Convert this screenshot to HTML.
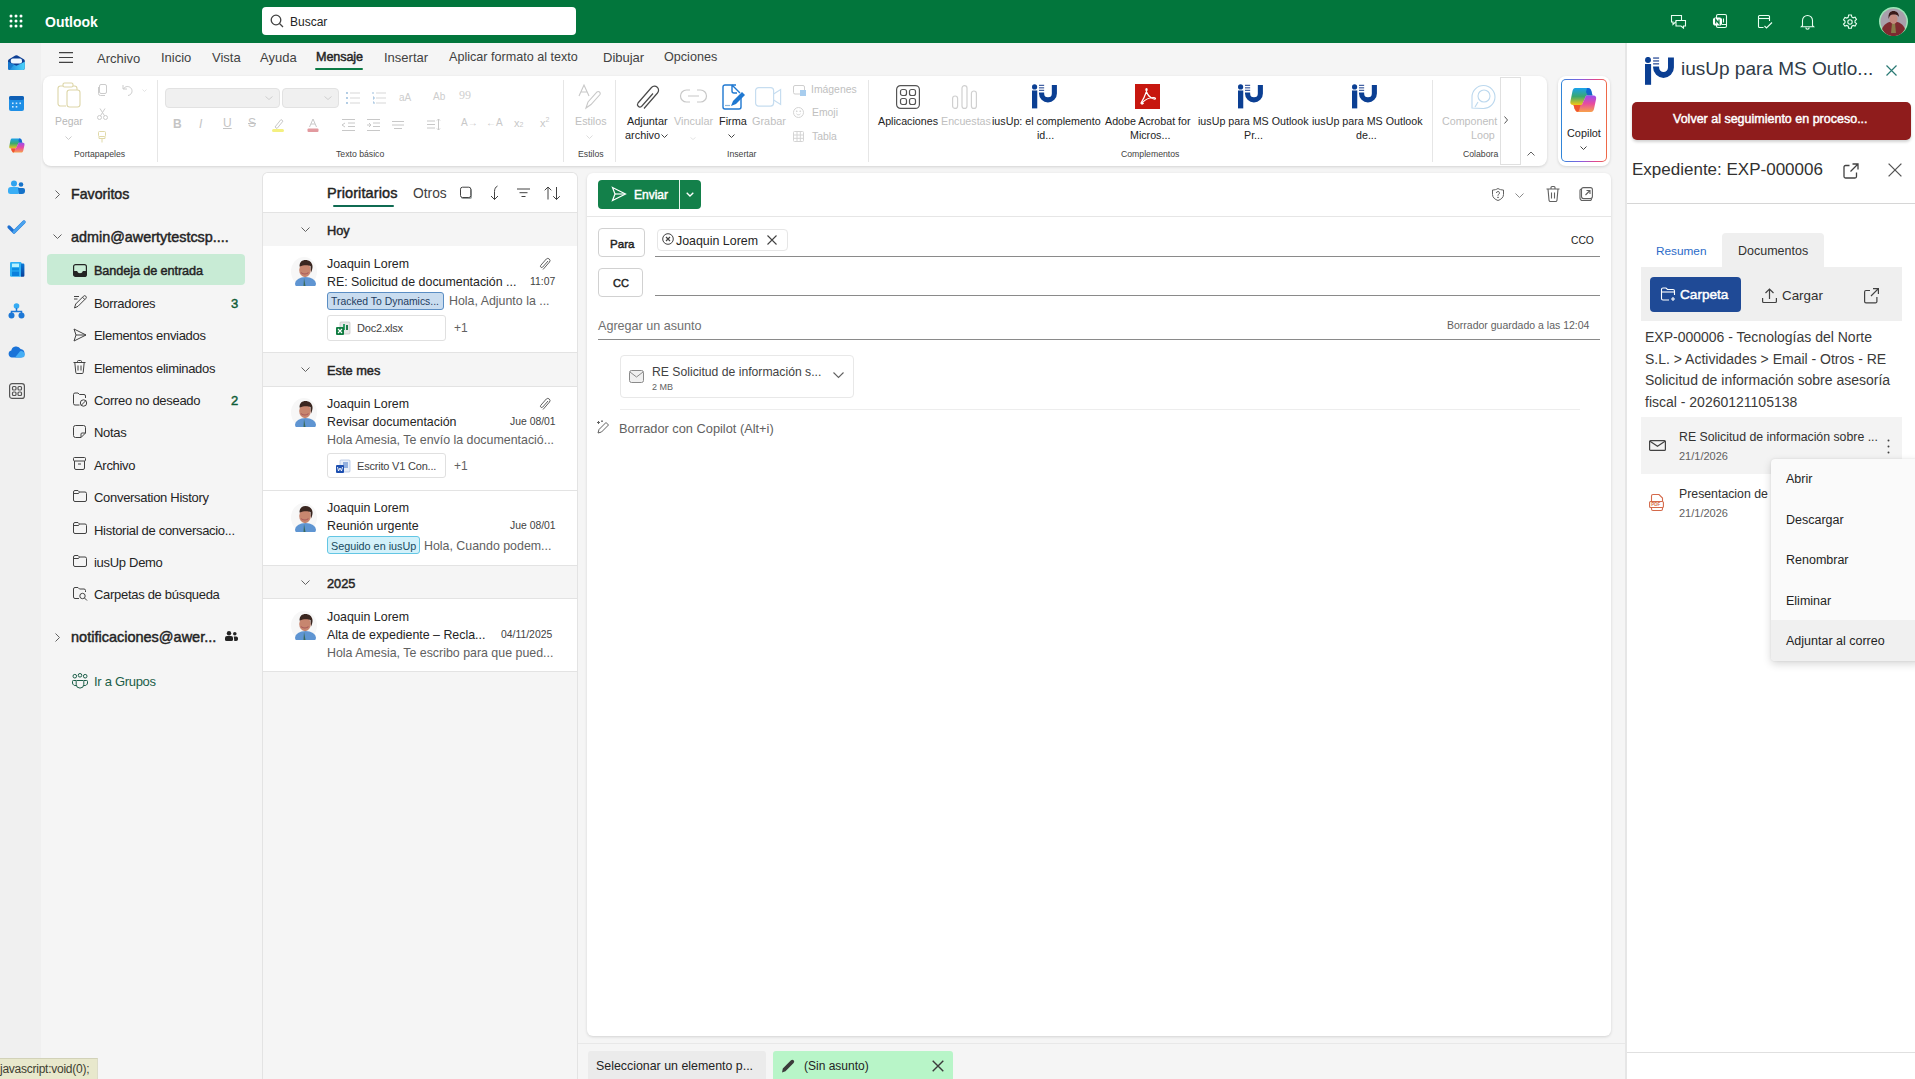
<!DOCTYPE html>
<html><head><meta charset="utf-8">
<style>
*{box-sizing:border-box;margin:0;padding:0}
html,body{width:1915px;height:1079px;overflow:hidden}
body{font-family:"Liberation Sans",sans-serif;background:#f5f5f5;position:relative;color:#242424;font-size:13px}
.a{position:absolute}
.t{position:absolute;white-space:nowrap}
svg{position:absolute;overflow:visible}
#top{left:0;top:0;width:1915px;height:43px;background:#02763c}
#rail{left:0;top:43px;width:41px;height:1036px;background:#f0f0f0}
#ribbon{left:43px;top:76px;width:1504px;height:90px;background:#fff;border-radius:8px;box-shadow:0 1px 3px rgba(0,0,0,.14)}
#copcard{left:1558px;top:76px;width:52px;height:90px;background:#fff;border-radius:8px;box-shadow:0 1px 3px rgba(0,0,0,.14)}
#list{left:262px;top:173px;width:315px;height:906px;background:#fff;border-radius:6px 6px 0 0;box-shadow:0 0 2px rgba(0,0,0,.12)}
#compose{left:587px;top:173px;width:1024px;height:863px;background:#fff;border-radius:6px;box-shadow:0 1px 3px rgba(0,0,0,.14)}
#rpane{left:1625px;top:43px;width:290px;height:1036px;background:#fff;border-left:2px solid #e6e6e6}
#folders .t{font-size:13px;color:#242424;letter-spacing:-.3px}
#folders .cnt{color:#0e5c36;letter-spacing:0;-webkit-text-stroke:.45px #0e5c36}
.grp{left:263px;width:314px;background:#f5f5f5}
.gt{font-size:12.8px;color:#242424;-webkit-text-stroke:.45px #242424}
.ln{font-size:12.4px}
.dt{font-size:10.4px;color:#424242}
.av{width:26px;height:29px;border-radius:50%;overflow:hidden;background:radial-gradient(ellipse 45% 30% at 50% 95%,#6d9ed6 0 99%,transparent 100%),radial-gradient(ellipse 28% 34% at 50% 42%,#b9765a 0 99%,transparent 100%),radial-gradient(ellipse 30% 22% at 50% 24%,#3a2a22 0 99%,transparent 100%),#f3f3f3}
.mi{font-size:12.5px;color:#242424}
</style></head><body>
<!-- TOP BAR -->
<div id="top" class="a">
  <svg style="left:9px;top:14px" width="14" height="14" viewBox="0 0 14 14" fill="#fff"><circle cx="2" cy="2" r="1.5"/><circle cx="7" cy="2" r="1.5"/><circle cx="12" cy="2" r="1.5"/><circle cx="2" cy="7" r="1.5"/><circle cx="7" cy="7" r="1.5"/><circle cx="12" cy="7" r="1.5"/><circle cx="2" cy="12" r="1.5"/><circle cx="7" cy="12" r="1.5"/><circle cx="12" cy="12" r="1.5"/></svg>
  <div class="t" style="left:45px;top:14px;font-size:14px;font-weight:700;color:#fff">Outlook</div>
  <div class="a" style="left:262px;top:7px;width:314px;height:28px;background:#fff;border-radius:4px"></div>
  <svg style="left:270px;top:14px" width="14" height="14" viewBox="0 0 14 14" fill="none" stroke="#424242" stroke-width="1.3"><circle cx="6" cy="6" r="4.8"/><path d="M9.5 9.5L13 13"/></svg>
  <div class="t" style="left:290px;top:15px;font-size:12px;color:#242424">Buscar</div>
  <!-- right icons -->
  <svg style="left:1670px;top:14px" width="16" height="15" viewBox="0 0 16 15" fill="none" stroke="#eafff2" stroke-width="1.1"><path d="M1.5 1.5h10v6.5H5.5L3 10.5V8H1.5z"/><path d="M6 6.5h9.5V12H13.5v2l-2.5-2H6z" fill="#02763c"/></svg>
  <svg style="left:1713px;top:13px" width="15" height="16" viewBox="0 0 15 16" fill="none" stroke="#eafff2" stroke-width="1.1"><rect x="3.5" y="1.5" width="10" height="13" rx="1.5"/><path d="M10.5 5.5v4M9 11.5h4.5"/><rect x="0.5" y="5" width="8" height="7" rx="2" fill="#fff" stroke="#fff"/><path d="M2.7 10.5V6.5l3.3 4v-4" stroke="#02763c" stroke-width="1.2"/></svg>
  <svg style="left:1757px;top:14px" width="16" height="16" viewBox="0 0 16 16" fill="none" stroke="#eafff2" stroke-width="1.1"><path d="M6.5 13.5H2.5a1 1 0 0 1-1-1v-10a1 1 0 0 1 1-1h9a1 1 0 0 1 1 1V7"/><path d="M1.5 4.5h11"/><path d="M7.5 12l2 2 5.5-5.5"/></svg>
  <svg style="left:1800px;top:14px" width="15" height="16" viewBox="0 0 15 16" fill="none" stroke="#eafff2" stroke-width="1.1"><path d="M2.5 11.5V6.5a5 5 0 0 1 10 0v5l1.2 1.3H1.3z"/><path d="M5.8 13.5a1.7 1.7 0 0 0 3.4 0"/></svg>
  <svg style="left:1842px;top:14px" width="16" height="16" viewBox="0 0 16 16" fill="none" stroke="#eafff2" stroke-width="1.1"><path d="M6.6 1h2.8l.4 2 1.4.8 1.9-.7 1.4 2.4-1.5 1.3v1.6l1.5 1.3-1.4 2.4-1.9-.7-1.4.8-.4 2H6.6l-.4-2-1.4-.8-1.9.7L1.5 10l1.5-1.3V7.1L1.5 5.8l1.4-2.4 1.9.7 1.4-.8z"/><circle cx="8" cy="8" r="2.2"/></svg>
  <svg style="left:1879px;top:7px" width="29" height="29"><use href="#avatar"/></svg>
</div>
<!-- LEFT RAIL -->
<div id="rail" class="a">
  <svg style="left:8px;top:12px" width="17" height="15" viewBox="0 0 17 15"><defs><linearGradient id="mg" x1="0" y1="0" x2="1" y2="0"><stop offset="0" stop-color="#1a86d8"/><stop offset="1" stop-color="#4cd4fc"/></linearGradient></defs><path d="M0 6Q0 5 1 4.3L7.3.6Q8.4 0 9.5.6L15.8 4.3Q16.8 5 16.8 6V13Q16.8 15 14.8 15H2Q0 15 0 13Z" fill="#0d3f94"/><rect x="2.8" y="3.6" width="11.2" height="5" rx="2" fill="#eef8ff"/><path d="M0 6.8L8.4 10.8 16.8 6.8V13Q16.8 15 14.8 15H2Q0 15 0 13Z" fill="url(#mg)"/><path d="M0 6.8L6 9.7 1.5 15H2Q0 15 0 13Z" fill="#1470c8" opacity=".7"/></svg>
  <svg style="left:9px;top:53px" width="15" height="15" viewBox="0 0 15 15"><rect x="0" y="0" width="15" height="15" rx="2" fill="#1e8fe6"/><rect x="0" y="0" width="15" height="4" rx="2" fill="#0f5fb5"/><g fill="#cfeaff"><rect x="3" y="6.5" width="1.6" height="1.6"/><rect x="6.7" y="6.5" width="1.6" height="1.6"/><rect x="10.4" y="6.5" width="1.6" height="1.6"/><rect x="3" y="10" width="1.6" height="1.6"/><rect x="6.7" y="10" width="1.6" height="1.6"/></g></svg>
  <svg style="left:9px;top:95px" width="16" height="15"><use href="#cop"/></svg>
  <svg style="left:8px;top:137px" width="17" height="14" viewBox="0 0 17 14"><circle cx="6" cy="3.5" r="3" fill="#2ea3ef"/><circle cx="13" cy="4.5" r="2.3" fill="#1572c9"/><path d="M0 10a3 3 0 0 1 3-3h6a3 3 0 0 1 3 3v1.5A2.5 2.5 0 0 1 9.5 14h-7A2.5 2.5 0 0 1 0 11.5z" fill="#3aaef5"/><path d="M10 8h5a2 2 0 0 1 2 2v1a3 3 0 0 1-3 3h-3" fill="#1572c9"/></svg>
  <svg style="left:8px;top:177px" width="17" height="14" viewBox="0 0 17 14"><path d="M1 7l5 5L16 2" fill="none" stroke="#1d6fd1" stroke-width="3.2" stroke-linecap="round" stroke-linejoin="round"/><path d="M6 12L16 2" stroke="#4aa3ee" stroke-width="3" stroke-linecap="round"/></svg>
  <svg style="left:10px;top:219px" width="15" height="15" viewBox="0 0 15 15"><defs><linearGradient id="bg2" x1="0" y1="0" x2="0" y2="1"><stop offset="0" stop-color="#0a7ad8"/><stop offset="1" stop-color="#0a3f98"/></linearGradient></defs><rect x="0" y="0" width="11.5" height="14.7" rx="1.3" fill="#2db0f4"/><rect x="2" y="1.6" width="7" height="3.6" fill="#b6f2ff"/><rect x="2" y="5.7" width="7" height="2.8" fill="#0b8ce2"/><rect x="2" y="9.5" width="7" height="4.5" fill="#0a80dc"/><path d="M11 1.5h2.2a1.2 1.2 0 0 1 1.2 1.2v10.8a1.2 1.2 0 0 1-1.2 1.2H11z" fill="url(#bg2)"/></svg>
  <svg style="left:8px;top:260px" width="17" height="16" viewBox="0 0 17 16" fill="#1d78d6"><circle cx="8.5" cy="3" r="2.8" fill="#34aaf2"/><path d="M8.5 5v3.5M3.5 11V8.5h10V11" fill="none" stroke="#1d78d6" stroke-width="1.5"/><circle cx="3.5" cy="12.5" r="3"/><circle cx="13.5" cy="12.5" r="3"/></svg>
  <svg style="left:8px;top:302px" width="17" height="13" viewBox="0 0 17 13"><path d="M4 12.5A3.5 3.5 0 0 1 3.3 5.6 5 5 0 0 1 12.6 4 4.3 4.3 0 0 1 13 12.5z" fill="#1a73d8"/><path d="M7 12.5L12 6.2A3.6 3.6 0 0 1 16.8 9.5 3 3 0 0 1 14 12.5z" fill="#45aef5"/></svg>
  <svg style="left:9px;top:340px" width="16" height="16" viewBox="0 0 16 16" fill="none" stroke="#555" stroke-width="1.2"><rect x=".6" y=".6" width="14.8" height="14.8" rx="2.5"/><rect x="3.5" y="3.5" width="3.5" height="3.5" rx="1"/><rect x="9" y="3.5" width="3.5" height="3.5" rx="1"/><rect x="3.5" y="9" width="3.5" height="3.5" rx="1"/><rect x="9" y="9" width="3.5" height="3.5" rx="1"/></svg>
</div>
<!-- TABS -->
<svg style="left:59px;top:52px" width="14" height="11" viewBox="0 0 16 11" preserveAspectRatio="none" stroke="#424242" stroke-width="1.2"><path d="M0 .6h16M0 5.5h16M0 10.4h16"/></svg>
<div class="t" style="left:97px;top:51px;font-size:13px;color:#424242">Archivo</div>
<div class="t" style="left:161px;top:50px;font-size:13px;color:#424242">Inicio</div>
<div class="t" style="left:212px;top:50px;font-size:13px;color:#424242">Vista</div>
<div class="t" style="left:260px;top:50px;font-size:13px;color:#424242">Ayuda</div>
<div class="t" style="left:316px;top:50px;font-size:12.6px;color:#242424;letter-spacing:-.1px;-webkit-text-stroke:.45px #242424">Mensaje</div>
<div class="a" style="left:315px;top:68px;width:48px;height:2px;background:#0b7a44;border-radius:1px"></div>
<div class="t" style="left:384px;top:50px;font-size:13px;color:#424242">Insertar</div>
<div class="t" style="left:449px;top:50px;font-size:12.6px;color:#424242">Aplicar formato al texto</div>
<div class="t" style="left:603px;top:50px;font-size:13px;color:#424242">Dibujar</div>
<div class="t" style="left:664px;top:50px;font-size:12.6px;color:#424242">Opciones</div>
<div id="ribbon" class="a"></div>
<div id="copcard" class="a"></div>
<!-- RIBBON CONTENT -->
<svg width="0" height="0" style="position:absolute"><defs>
<symbol id="man" viewBox="0 0 26 29"><ellipse cx="13" cy="14.5" rx="13" ry="14.5" fill="#f7f7f7"/><ellipse cx="14.5" cy="26.5" rx="10.5" ry="6.5" fill="#5f95d2"/><path d="M13 21l1.5 8h-2z" fill="#3a6a5a"/><ellipse cx="14" cy="13" rx="5.8" ry="7.2" fill="#c7866f"/><path d="M8.5 9.5C8.5 5 11 3 14.5 3S21 5 21.5 9c.2 2-.5 4.5-1.5 6.5L19.5 9C17 8 12 8 9 9.5z" fill="#3a2620"/><path d="M10 15.5c1.5 2 6 2 7.5 0" stroke="#a85a5a" stroke-width="1.2" fill="none"/></symbol>
<symbol id="avatar" viewBox="0 0 29 29"><circle cx="14.5" cy="14.5" r="14.5" fill="#9ee6b8"/><circle cx="14.5" cy="14.5" r="13" fill="#a8a0ac"/><path d="M3 22c2-5 6-7.5 11.5-7.5S24 17 26 22c-2.5 4.5-6.5 7-11.5 7S5.5 26.5 3 22z" fill="#7e2a30"/><path d="M13 16h3l1 10h-5z" fill="#8a7a4a"/><ellipse cx="14.5" cy="12" rx="4" ry="5" fill="#c48a80"/><path d="M9.5 10c0-4 2-6 5-6s5.5 2 5.5 6c-1-2-3-2.5-5.5-2.5S11 8 9.5 12z" fill="#3a1a1a"/></symbol>
<symbol id="cop" viewBox="0 0 27 24"><defs><linearGradient id="cg1" x1="0" y1="0" x2="0" y2="1"><stop offset="0" stop-color="#1aa2ee"/><stop offset=".5" stop-color="#3aa870"/><stop offset="1" stop-color="#f4c614"/></linearGradient><linearGradient id="cg2" x1="0" y1="0" x2="0" y2="1"><stop offset="0" stop-color="#9b4cf0"/><stop offset=".5" stop-color="#e84c9e"/><stop offset="1" stop-color="#f8a24a"/></linearGradient></defs><path d="M5 0H18C20 0 21 1.5 21.5 3.5L22.5 7.5H17.5C16.5 7.5 15.8 8 15.5 9L12 17H3C1 17 0 15.5 .4 13.5L2.5 3C3 1 4 0 5 0Z" fill="url(#cg1)"/><path d="M17 0H18C20 0 21 1.5 21.5 3.5L22.5 7.5H17.5L16 4Z" fill="#0f56d6" opacity=".8"/><path d="M21 24H8C6 24 5 22.5 4.5 20.5L3.5 17H10.5C11.5 17 12.2 16.5 12.5 15.5L16 7.5H23.5C25.5 7.5 26.5 9 26.1 11L24 21C23.5 23 22.5 24 21 24Z" fill="url(#cg2)"/><path d="M4.5 20.5L3.5 17H10.5L9 22.5C8.5 24 7 24 6.5 23.5Z" fill="#f0542e"/></symbol>
<symbol id="iu" viewBox="0 0 29 28"><circle cx="3" cy="2.9" r="3" fill="#0b3f93"/><rect x="0" y="7" width="6.1" height="20.8" fill="#0b3f93"/><g fill="#30519a"><rect x="8.1" y="0.4" width="6" height="1.3"/><rect x="8.1" y="3.3" width="6" height="1.3"/><rect x="8.1" y="6.2" width="6" height="1.3"/></g><path d="M8.1 9.4H14.1V10.5A4.45 4.45 0 0 0 23 10.5V0.6H28.9V10.5A10.4 10.4 0 0 1 8.1 10.5Z" fill="#0b3f93"/></symbol>
</defs></svg>
<div class="t" style="left:0;top:0"></div>
<!-- Portapapeles -->
<svg style="left:57px;top:82px" width="24" height="26" viewBox="0 0 24 26" fill="none" stroke="#ddd6a8" stroke-width="1.1"><path d="M6 4H3.5A2.5 2.5 0 0 0 1 6.5v15A2.5 2.5 0 0 0 3.5 24H9"/><rect x="6" y="1" width="10" height="4" rx="1.5"/><rect x="10" y="8" width="13" height="17" rx="2.5"/><path d="M16 4h1.5A2.5 2.5 0 0 1 20 6.5V8"/></svg>
<div class="t" style="left:55px;top:116px;font-size:10.4px;color:#b8b8b8">Pegar</div>
<svg style="left:65px;top:136px" width="7" height="4" viewBox="0 0 7 4" fill="none" stroke="#ccc" stroke-width="1"><path d="M.5.5l3 3 3-3"/></svg>
<svg style="left:98px;top:84px" width="9" height="12" viewBox="0 0 9 12" fill="none" stroke="#ccc" stroke-width="1"><rect x="1.5" y=".5" width="7" height="9" rx="1.5"/><path d="M.5 3v6.5A2 2 0 0 0 2.5 11.5H7"/></svg>
<svg style="left:122px;top:84px" width="11" height="12" viewBox="0 0 11 12" fill="none" stroke="#ccc" stroke-width="1"><path d="M1 1v4h4"/><path d="M1.5 5A4.5 4.5 0 1 1 6 11.5"/></svg>
<svg style="left:142px;top:89px" width="5" height="3" viewBox="0 0 5 3" fill="none" stroke="#ddd" stroke-width=".8"><path d="M.5.5l2 2 2-2"/></svg>
<svg style="left:97px;top:108px" width="11" height="12" viewBox="0 0 11 12" fill="none" stroke="#ccc" stroke-width="1"><circle cx="2.5" cy="9.5" r="2"/><circle cx="8.5" cy="9.5" r="2"/><path d="M3.5 7.8L8 .5M7.5 7.8L3 .5"/></svg>
<svg style="left:98px;top:131px" width="8" height="12" viewBox="0 0 8 12" fill="none" stroke="#e0d9a8" stroke-width="1"><rect x=".5" y=".5" width="7" height="5" rx="1"/><path d="M1 5.5v2h6v-2M4 7.5v4"/></svg>
<div class="t" style="left:74px;top:149px;font-size:8.7px;color:#424242">Portapapeles</div>
<div class="a" style="left:157px;top:80px;width:1px;height:82px;background:#e6e6e6"></div>
<!-- Texto basico -->
<div class="a" style="left:165px;top:88px;width:115px;height:20px;background:#f0f0f0;border:1px solid #e2e2e2;border-radius:4px"></div>
<svg style="left:265px;top:96px" width="8" height="4" viewBox="0 0 8 4" fill="none" stroke="#d0d0d0" stroke-width="1"><path d="M.5.5l3.5 3 3.5-3"/></svg>
<div class="a" style="left:282px;top:88px;width:57px;height:20px;background:#f0f0f0;border:1px solid #e2e2e2;border-radius:4px"></div>
<svg style="left:324px;top:96px" width="8" height="4" viewBox="0 0 8 4" fill="none" stroke="#d0d0d0" stroke-width="1"><path d="M.5.5l3.5 3 3.5-3"/></svg>
<g></g>
<svg style="left:346px;top:92px" width="14" height="12" viewBox="0 0 14 12" fill="none" stroke="#d2d2d2" stroke-width=".9"><circle cx="1" cy="1" r=".9" fill="#8fb6d8" stroke="none"/><circle cx="1" cy="6" r=".9" fill="#8fb6d8" stroke="none"/><circle cx="1" cy="11" r=".9" fill="#8fb6d8" stroke="none"/><path d="M4 1h10M4 6h10M4 11h10"/></svg>
<svg style="left:372px;top:92px" width="14" height="12" viewBox="0 0 14 12" fill="none" stroke="#d2d2d2" stroke-width=".9"><path d="M1 0v2M1 5h1v2H1M1 10h1v2" stroke="#8fb6d8"/><path d="M4 1h10M4 6h10M4 11h10"/></svg>
<div class="t" style="left:399px;top:92px;font-size:10px;color:#cdcdcd">aA</div>
<div class="t" style="left:433px;top:91px;font-size:10px;color:#cdcdcd">Ab</div>
<div class="t" style="left:459px;top:88px;font-size:12px;color:#cfcfcf;font-family:'Liberation Serif'">99</div>
<div class="t" style="left:173px;top:117px;font-size:12px;color:#c4c4c4;font-weight:700">B</div>
<div class="t" style="left:199px;top:117px;font-size:12px;color:#c4c4c4;font-style:italic">I</div>
<div class="t" style="left:223px;top:116px;font-size:12px;color:#c4c4c4;text-decoration:underline">U</div>
<div class="t" style="left:248px;top:116px;font-size:12px;color:#c4c4c4;text-decoration:line-through">S</div>
<svg style="left:272px;top:118px" width="13" height="14" viewBox="0 0 13 14" fill="none" stroke="#c8c8c8" stroke-width="1"><path d="M3 9L9 1.5l2 1.6L5 10.5z"/><rect x="0" y="11" width="12" height="3" rx="1.5" fill="#f4f080" stroke="none"/></svg>
<svg style="left:307px;top:118px" width="12" height="14" viewBox="0 0 12 14" fill="none" stroke="#c8c8c8" stroke-width="1"><path d="M2.5 9L6 1l3.5 8M4 6h4"/><rect x=".5" y="10.5" width="11" height="3.5" rx="1" fill="#e29a9f" stroke="none"/></svg>
<svg style="left:341px;top:119px" width="14" height="12" viewBox="0 0 14 12" fill="none" stroke="#c8c8c8" stroke-width="1"><path d="M1 .5h13M7 4h7M7 7.5h7M1 11.5h13M4 4L1 6l3 2"/></svg>
<svg style="left:366px;top:119px" width="14" height="12" viewBox="0 0 14 12" fill="none" stroke="#c8c8c8" stroke-width="1"><path d="M1 .5h13M7 4h7M7 7.5h7M1 11.5h13M1 6h4M3 4l2 2-2 2"/></svg>
<svg style="left:392px;top:121px" width="12" height="8" viewBox="0 0 12 8" fill="none" stroke="#c8c8c8" stroke-width="1"><path d="M0 .5h12M0 4h12M2 7.5h8"/></svg>
<svg style="left:427px;top:118px" width="14" height="13" viewBox="0 0 14 13" fill="none" stroke="#c8c8c8" stroke-width="1"><path d="M0 3h8M0 6.5h8M0 10h8M11.5 1v11M10 2.5l1.5-1.5 1.5 1.5M10 10.5l1.5 1.5 1.5-1.5"/></svg>
<div class="t" style="left:461px;top:117px;font-size:10px;color:#c8c8c8">A→</div>
<div class="t" style="left:486px;top:117px;font-size:10px;color:#c8c8c8">←A</div>
<div class="t" style="left:514px;top:117px;font-size:11px;color:#c8c8c8">x<span style="font-size:7px">2</span></div>
<div class="t" style="left:540px;top:116px;font-size:11px;color:#c8c8c8">x<sup style="font-size:7px">2</sup></div>
<div class="t" style="left:336px;top:149px;font-size:8.7px;color:#424242">Texto básico</div>
<div class="a" style="left:563px;top:80px;width:1px;height:82px;background:#e6e6e6"></div>
<!-- Estilos -->
<svg style="left:578px;top:84px" width="24" height="26" viewBox="0 0 24 26" fill="none" stroke="#c8c8c8" stroke-width="1.1"><path d="M1 12L6 1l5 11M3 8h6"/><path d="M8 24l2-6 9-10a2 2 0 0 1 3 2.5l-9 10z"/></svg>
<div class="t" style="left:575px;top:115px;font-size:10.7px;color:#c0c0c0">Estilos</div>
<svg style="left:586px;top:135px" width="7" height="4" viewBox="0 0 7 4" fill="none" stroke="#ddd" stroke-width="1"><path d="M.5.5l3 3 3-3"/></svg>
<div class="t" style="left:578px;top:149px;font-size:8.7px;color:#424242">Estilos</div>
<div class="a" style="left:615px;top:80px;width:1px;height:82px;background:#e6e6e6"></div>
<!-- Insertar -->
<svg style="left:634px;top:84px" width="27" height="26" viewBox="0 0 27 26" fill="none" stroke="#4a4a4a" stroke-width="1.2"><path d="M10 24.5L23.5 9a4 4 0 0 0-6-5.5L4 19a2.5 2.5 0 0 0 3.5 3.5L19 9.5"/></svg>
<div class="t" style="left:627px;top:115px;font-size:10.9px;color:#242424">Adjuntar</div>
<div class="t" style="left:625px;top:129px;font-size:10.9px;color:#242424">archivo</div>
<svg style="left:661px;top:134px" width="7" height="4" viewBox="0 0 7 4" fill="none" stroke="#424242" stroke-width="1"><path d="M.5.5l3 3 3-3"/></svg>
<svg style="left:680px;top:89px" width="27" height="14" viewBox="0 0 27 14" fill="none" stroke="#c8c8c8" stroke-width="1.2"><path d="M10 13H6.5a6 6 0 0 1 0-12H10M17 13h3.5a6 6 0 0 0 0-12H17M8 7h11"/></svg>
<div class="t" style="left:674px;top:115px;font-size:10.9px;color:#c0c0c0">Vincular</div>
<svg style="left:690px;top:137px" width="6" height="3" viewBox="0 0 6 3" fill="none" stroke="#ddd" stroke-width=".8"><path d="M.5.5l2.5 2 2.5-2"/></svg>
<svg style="left:722px;top:84px" width="23" height="26" viewBox="0 0 23 26" fill="none"><path d="M14 1H3A2 2 0 0 0 1 3v20a2 2 0 0 0 2 2h14a2 2 0 0 0 2-2V14" stroke="#1f78d1" stroke-width="1.4"/><path d="M10 1v6a2 2 0 0 0 2 2h3M10 1l8 8" stroke="#1f78d1" stroke-width="1.4"/><path d="M9 22l2-5 9-9 3 3-9 9z" fill="#1f78d1"/><path d="M3 21.5h5" stroke="#8fb6d8" stroke-width="1.2"/></svg>
<div class="t" style="left:719px;top:115px;font-size:10.9px;color:#242424">Firma</div>
<svg style="left:728px;top:134px" width="7" height="4" viewBox="0 0 7 4" fill="none" stroke="#424242" stroke-width="1"><path d="M.5.5l3 3 3-3"/></svg>
<svg style="left:755px;top:87px" width="27" height="20" viewBox="0 0 27 20" fill="none" stroke="#c6ddf0" stroke-width="1.2"><rect x=".6" y=".6" width="18" height="18.5" rx="3"/><path d="M18.6 7l7-4.5v15l-7-4.5"/></svg>
<div class="t" style="left:752px;top:115px;font-size:10.9px;color:#c0c0c0">Grabar</div>
<svg style="left:793px;top:85px" width="13" height="11" viewBox="0 0 13 11" fill="none" stroke="#cfcfcf" stroke-width="1"><rect x=".5" y=".5" width="11" height="8.5" rx="1.5"/><rect x="7" y="5" width="6" height="6" fill="#a8cdee" stroke="none"/></svg>
<div class="t" style="left:811px;top:84px;font-size:10.4px;color:#c0c0c0">Imágenes</div>
<svg style="left:793px;top:107px" width="11" height="11" viewBox="0 0 11 11" fill="none" stroke="#d4d4d4" stroke-width="1"><circle cx="5.5" cy="5.5" r="5"/><path d="M3.5 6.8a2.5 2.5 0 0 0 4 0"/><circle cx="3.8" cy="4.2" r=".4" fill="#ccc"/><circle cx="7.2" cy="4.2" r=".4" fill="#ccc"/></svg>
<div class="t" style="left:812px;top:107px;font-size:10.4px;color:#c0c0c0">Emoji</div>
<svg style="left:793px;top:131px" width="11" height="11" viewBox="0 0 11 11" fill="none" stroke="#d4d4d4" stroke-width="1"><rect x=".5" y=".5" width="10" height="10" rx="1"/><path d="M.5 4h10M.5 7.3h10M4 .5v10M7.3 .5v10"/></svg>
<div class="t" style="left:812px;top:131px;font-size:10.4px;color:#c0c0c0">Tabla</div>
<div class="t" style="left:727px;top:149px;font-size:8.7px;color:#424242">Insertar</div>
<div class="a" style="left:868px;top:80px;width:1px;height:82px;background:#e6e6e6"></div>
<!-- Complementos -->
<svg style="left:896px;top:85px" width="24" height="24" viewBox="0 0 24 24" fill="none" stroke="#555" stroke-width="1.2"><rect x=".6" y=".6" width="22.8" height="22.8" rx="4"/><rect x="4.5" y="4.5" width="6" height="6" rx="2"/><rect x="13.5" y="4.5" width="6" height="6" rx="2"/><rect x="4.5" y="13.5" width="6" height="6" rx="2"/><rect x="13.5" y="13.5" width="6" height="6" rx="2"/></svg>
<div class="t" style="left:878px;top:115px;font-size:10.7px;color:#242424">Aplicaciones</div>
<svg style="left:952px;top:85px" width="25" height="24" viewBox="0 0 25 24" fill="none" stroke="#d0d0d0" stroke-width="1.2"><rect x=".6" y="11" width="5" height="12.4" rx="2.5"/><rect x="10" y=".6" width="5" height="22.8" rx="2.5"/><rect x="19.4" y="6" width="5" height="17.4" rx="2.5"/></svg>
<div class="t" style="left:941px;top:115px;font-size:10.7px;color:#c0c0c0">Encuestas</div>
<svg style="left:1032px;top:84px" width="25" height="25"><use href="#iu"/></svg>
<div class="t" style="left:992px;top:115px;font-size:10.7px;color:#242424">iusUp: el complemento</div>
<div class="t" style="left:1037px;top:129px;font-size:10.7px;color:#242424">id...</div>
<svg style="left:1135px;top:84px" width="25" height="25" viewBox="0 0 25 25"><rect width="25" height="25" fill="#c7170f"/><path d="M6 19c2-3 4-7 6-13 .5-2-1.5-2-1 0 1 4 4 8 8 9 2 .5 2-1.5 0-1.5-4 0-9 2-12 5.5-1 1 0 1.5 1 .5z" fill="none" stroke="#fff" stroke-width="1.2"/></svg>
<div class="t" style="left:1105px;top:115px;font-size:10.7px;color:#242424">Adobe Acrobat for</div>
<div class="t" style="left:1130px;top:129px;font-size:10.7px;color:#242424">Micros...</div>
<svg style="left:1238px;top:84px" width="25" height="25"><use href="#iu"/></svg>
<div class="t" style="left:1198px;top:115px;font-size:10.7px;color:#242424">iusUp para MS Outlook</div>
<div class="t" style="left:1244px;top:129px;font-size:10.7px;color:#242424">Pr...</div>
<svg style="left:1352px;top:84px" width="25" height="25"><use href="#iu"/></svg>
<div class="t" style="left:1312px;top:115px;font-size:10.7px;color:#242424">iusUp para MS Outlook</div>
<div class="t" style="left:1356px;top:129px;font-size:10.7px;color:#242424">de...</div>
<div class="t" style="left:1121px;top:149px;font-size:8.7px;color:#424242">Complementos</div>
<div class="a" style="left:1432px;top:80px;width:1px;height:82px;background:#e6e6e6"></div>
<!-- Colabora -->
<svg style="left:1470px;top:84px" width="26" height="26" viewBox="0 0 26 26" fill="none" stroke="#bcd8ee" stroke-width="1.1"><path d="M2 24V13A11.5 11.5 0 1 1 13 24.5z"/><circle cx="14" cy="12" r="6"/><path d="M8 18l-3 5"/></svg>
<div class="t" style="left:1442px;top:115px;width:58px;overflow:hidden;font-size:10.7px;color:#c0c0c0">Component</div>
<div class="t" style="left:1471px;top:129px;font-size:10.7px;color:#c0c0c0">Loop</div>
<div class="t" style="left:1463px;top:149px;width:37px;overflow:hidden;font-size:8.7px;color:#424242">Colabora</div>
<div class="a" style="left:1500px;top:77px;width:21px;height:88px;border:1px solid #e0e0e0;background:#fff"></div>
<svg style="left:1504px;top:116px" width="4" height="8" viewBox="0 0 4 8" fill="none" stroke="#555" stroke-width="1"><path d="M.5.5l3 3.5-3 3.5"/></svg>
<svg style="left:1527px;top:151px" width="8" height="5" viewBox="0 0 8 5" fill="none" stroke="#616161" stroke-width="1"><path d="M.5 4.5l3.5-3.5 3.5 3.5"/></svg>
<!-- Copilot card -->
<div class="a" style="left:1561px;top:79px;width:46px;height:83px;border-radius:5px;padding:1.2px;background:linear-gradient(90deg,#2f86d8 0%,#8a5ce0 45%,#e0468f 75%,#ef6a45 100%)"><div style="width:100%;height:100%;background:#fff;border-radius:4px"></div></div>
<svg style="left:1570px;top:88px" width="27" height="24"><use href="#cop"/></svg>
<div class="t" style="left:1567px;top:127px;font-size:10.9px;color:#242424">Copilot</div>
<svg style="left:1580px;top:146px" width="7" height="4" viewBox="0 0 7 4" fill="none" stroke="#424242" stroke-width="1"><path d="M.5.5l3 3 3-3"/></svg>
<!-- FOLDER PANE -->
<svg style="left:55px;top:190px" width="5" height="9" viewBox="0 0 5 9" fill="none" stroke="#616161" stroke-width="1"><path d="M.5.5l4 4-4 4"/></svg>
<div class="t" style="left:71px;top:186px;font-size:14.2px;color:#242424;letter-spacing:0;-webkit-text-stroke:.45px #242424">Favoritos</div>
<svg style="left:53px;top:234px" width="9" height="5" viewBox="0 0 9 5" fill="none" stroke="#616161" stroke-width="1"><path d="M.5.5l4 4 4-4"/></svg>
<div class="t" style="left:71px;top:229px;font-size:14.4px;color:#242424;letter-spacing:0;-webkit-text-stroke:.45px #242424">admin@awertytestcsp....</div>
<div class="a" style="left:47px;top:254px;width:198px;height:31px;background:#c8ebd5;border-radius:4px"></div>
<svg style="left:73px;top:264px" width="14" height="13" viewBox="0 0 14 13"><rect x=".6" y=".6" width="12.8" height="11.8" rx="2" fill="none" stroke="#242424" stroke-width="1.2"/><path d="M.6 7h3.5a3 3 0 0 0 5.8 0h3.5v3.4a2 2 0 0 1-2 2H2.6a2 2 0 0 1-2-2z" fill="#242424"/></svg>
<div class="t" style="left:94px;top:264px;font-size:12.7px;color:#242424;letter-spacing:-.1px;-webkit-text-stroke:.45px #242424">Bandeja de entrada</div>
<div id="folders">
<svg style="left:73px;top:295px" width="14" height="14" viewBox="0 0 14 14" fill="none" stroke="#424242" stroke-width="1"><path d="M1 1.5h5M1 4h3.5M1.5 13l1.2-4L10.5 1.2a1.6 1.6 0 0 1 2.3 2.3L5 11.3z"/><path d="M9.5 2.2l2.3 2.3"/></svg>
<div class="t" style="left:94px;top:296px">Borradores</div><div class="t cnt" style="left:231px;top:296px">3</div>
<svg style="left:73px;top:328px" width="14" height="14" viewBox="0 0 14 14" fill="none" stroke="#424242" stroke-width="1"><path d="M1 1l12 6-12 6 2-6z"/><path d="M3 7h10"/></svg>
<div class="t" style="left:94px;top:328px">Elementos enviados</div>
<svg style="left:73px;top:360px" width="13" height="14" viewBox="0 0 13 14" fill="none" stroke="#424242" stroke-width="1"><path d="M.5 2.5h12M4.5 2.5V1.5a1 1 0 0 1 1-1h2a1 1 0 0 1 1 1v1M1.8 2.5l1 10a1 1 0 0 0 1 1h5.4a1 1 0 0 0 1-1l1-10M5 5.5v5M8 5.5v5"/></svg>
<div class="t" style="left:94px;top:361px">Elementos eliminados</div>
<svg style="left:73px;top:392px" width="15" height="15" viewBox="0 0 15 15" fill="none" stroke="#424242" stroke-width="1"><path d="M6.5 13H2a1.5 1.5 0 0 1-1.5-1.5v-9A1.5 1.5 0 0 1 2 1h3l1.5 1.5H11A1.5 1.5 0 0 1 12.5 4v2"/><circle cx="10.5" cy="11" r="3.2"/><path d="M8.3 13.2l4.4-4.4"/></svg>
<div class="t" style="left:94px;top:393px">Correo no deseado</div><div class="t cnt" style="left:231px;top:393px">2</div>
<svg style="left:73px;top:425px" width="13" height="13" viewBox="0 0 13 13" fill="none" stroke="#424242" stroke-width="1"><path d="M8 12.5H2.5a2 2 0 0 1-2-2v-8a2 2 0 0 1 2-2h8a2 2 0 0 1 2 2V8z"/><path d="M8 12.5V9a1 1 0 0 1 1-1h3.5"/></svg>
<div class="t" style="left:94px;top:425px">Notas</div>
<svg style="left:73px;top:457px" width="13" height="13" viewBox="0 0 13 13" fill="none" stroke="#424242" stroke-width="1"><rect x=".5" y=".5" width="12" height="3.5" rx="1"/><path d="M1.5 4v7a1.5 1.5 0 0 0 1.5 1.5h7A1.5 1.5 0 0 0 11.5 11V4M5 7h3"/></svg>
<div class="t" style="left:94px;top:458px">Archivo</div>
<svg style="left:73px;top:490px" width="14" height="12" viewBox="0 0 14 12" fill="none" stroke="#424242" stroke-width="1"><path d="M.5 2A1.5 1.5 0 0 1 2 .5h3l1.5 1.5H12A1.5 1.5 0 0 1 13.5 3.5v6.5A1.5 1.5 0 0 1 12 11.5H2A1.5 1.5 0 0 1 .5 10z"/><path d="M.5 3.5h5l1-1.5"/></svg>
<div class="t" style="left:94px;top:490px">Conversation History</div>
<svg style="left:73px;top:522px" width="14" height="12" viewBox="0 0 14 12" fill="none" stroke="#424242" stroke-width="1"><path d="M.5 2A1.5 1.5 0 0 1 2 .5h3l1.5 1.5H12A1.5 1.5 0 0 1 13.5 3.5v6.5A1.5 1.5 0 0 1 12 11.5H2A1.5 1.5 0 0 1 .5 10z"/><path d="M.5 3.5h5l1-1.5"/></svg>
<div class="t" style="left:94px;top:523px">Historial de conversacio...</div>
<svg style="left:73px;top:555px" width="14" height="12" viewBox="0 0 14 12" fill="none" stroke="#424242" stroke-width="1"><path d="M.5 2A1.5 1.5 0 0 1 2 .5h3l1.5 1.5H12A1.5 1.5 0 0 1 13.5 3.5v6.5A1.5 1.5 0 0 1 12 11.5H2A1.5 1.5 0 0 1 .5 10z"/><path d="M.5 3.5h5l1-1.5"/></svg>
<div class="t" style="left:94px;top:555px">iusUp Demo</div>
<svg style="left:73px;top:587px" width="15" height="14" viewBox="0 0 15 14" fill="none" stroke="#424242" stroke-width="1"><path d="M6 11.5H2A1.5 1.5 0 0 1 .5 10V2A1.5 1.5 0 0 1 2 .5h3l1.5 1.5H11A1.5 1.5 0 0 1 12.5 3.5V5"/><circle cx="9.5" cy="9" r="2.7"/><path d="M11.5 11l2.5 2.5"/></svg>
<div class="t" style="left:94px;top:587px">Carpetas de búsqueda</div>
</div>
<svg style="left:55px;top:633px" width="5" height="9" viewBox="0 0 5 9" fill="none" stroke="#616161" stroke-width="1"><path d="M.5.5l4 4-4 4"/></svg>
<div class="t" style="left:71px;top:629px;font-size:14.5px;color:#242424;letter-spacing:0;-webkit-text-stroke:.45px #242424">notificaciones@awer...</div>
<svg style="left:225px;top:631px" width="13" height="10" viewBox="0 0 13 10" fill="#242424"><circle cx="4" cy="2.3" r="2.2"/><circle cx="9.8" cy="2.8" r="1.8"/><path d="M0 7a2 2 0 0 1 2-2h4a2 2 0 0 1 2 2v1.5A1.5 1.5 0 0 1 6.5 10h-5A1.5 1.5 0 0 1 0 8.5z"/><path d="M8.8 5.5h2.5a1.7 1.7 0 0 1 1.7 1.7v1A1.8 1.8 0 0 1 11.2 10H9.3z"/></svg>
<svg style="left:72px;top:673px" width="16" height="15" viewBox="0 0 16 15" fill="none" stroke="#1b5e48" stroke-width="1"><circle cx="2.8" cy="3.2" r="1.8"/><circle cx="8" cy="2.3" r="1.8"/><circle cx="13.2" cy="3.2" r="1.8"/><path d="M5 7.5h6a.8.8 0 0 1 .8.8v3a3.8 3.8 0 0 1-7.6 0v-3A.8.8 0 0 1 5 7.5z"/><path d="M4 12.5A2.8 2.8 0 0 1 .5 10V8.3a.8.8 0 0 1 .8-.8H4M12 12.5a2.8 2.8 0 0 0 3.5-2.5V8.3a.8.8 0 0 0-.8-.8H12"/></svg>
<div class="t" style="left:94px;top:674px;font-size:13px;color:#1b5e48;letter-spacing:-.3px">Ir a Grupos</div>
<!-- MESSAGE LIST -->
<div class="a" style="left:262px;top:172px;width:316px;height:907px;background:#f5f5f5;border:1px solid #e3e3e3;border-bottom:none;border-radius:6px 6px 0 0"></div>
<div class="a" style="left:263px;top:173px;width:314px;height:498px;background:#fff;border-radius:5px 5px 0 0"></div>
<div class="t" style="left:327px;top:185px;font-size:14.5px;color:#242424;letter-spacing:.1px;-webkit-text-stroke:.45px #242424">Prioritarios</div>
<div class="a" style="left:333px;top:205px;width:61px;height:2px;background:#0f6b52;border-radius:1px"></div>
<div class="t" style="left:413px;top:186px;font-size:13.8px;color:#424242">Otros</div>
<svg style="left:459px;top:186px" width="15" height="14" viewBox="0 0 15 14" fill="none"><rect x="2" y="2.5" width="11" height="10.5" rx="2" fill="#9aa0a0"/><rect x="1.5" y="1.2" width="10.3" height="10.3" rx="2" fill="#fff" stroke="#424242" stroke-width="1"/></svg>
<svg style="left:489px;top:185px" width="11" height="16" viewBox="0 0 11 16" fill="none" stroke="#424242" stroke-width="1"><path d="M8.5 1C6.5 2 5.5 4 5.5 6.5V14.5M2 11l3.5 3.5L9 11"/></svg>
<svg style="left:517px;top:188px" width="13" height="10" viewBox="0 0 13 10" fill="none" stroke="#424242" stroke-width="1"><path d="M0 1h13M2.5 4.7h8M4.5 8.5h4"/></svg>
<svg style="left:544px;top:186px" width="17" height="14" viewBox="0 0 17 14" fill="none" stroke="#424242" stroke-width="1"><path d="M4 13.5V1M.7 4.3L4 1l3.3 3.3M12.5 1v12.5M9.2 10.2l3.3 3.3 3.3-3.3"/></svg>
<div class="a" style="left:263px;top:212px;width:314px;height:1px;background:#e3e3e3"></div>
<!-- group Hoy -->
<div class="a grp" style="top:213px;height:33px"></div>
<svg style="left:301px;top:227px" width="9" height="5" viewBox="0 0 9 5" fill="none" stroke="#616161" stroke-width="1"><path d="M.5.5l4 4 4-4"/></svg>
<div class="t gt" style="left:327px;top:223px">Hoy</div>
<!-- email 1 -->
<svg style="left:291px;top:257px" width="26" height="29"><use href="#man"/></svg>
<div class="t ln" style="left:327px;top:257px;color:#242424">Joaquin Lorem</div>
<svg style="left:539px;top:256px" width="12" height="14" viewBox="0 0 12 14" fill="none" stroke="#616161" stroke-width="1"><path d="M4 13.5L10.5 6a2.2 2.2 0 0 0-3.2-3L1.8 9.3a1.3 1.3 0 0 0 1.9 1.8L9 5"/></svg>
<div class="t ln" style="left:327px;top:275px;color:#242424">RE: Solicitud de documentación ...</div>
<div class="t dt" style="left:530px;top:276px">11:07</div>
<div class="a" style="left:327px;top:292px;width:117px;height:18px;background:#c9dcef;border:1px solid #5b8ec4;border-radius:3px"></div>
<div class="t" style="left:331px;top:296px;font-size:10.4px;color:#1f3c5f">Tracked To Dynamics...</div>
<div class="t ln" style="left:449px;top:294px;color:#616161">Hola, Adjunto la ...</div>
<div class="a" style="left:327px;top:315px;width:119px;height:26px;border:1px solid #e0e0e0;border-radius:3px"></div>
<svg style="left:336px;top:321px" width="15" height="15" viewBox="0 0 15 15"><rect x="4" y="1" width="10" height="12" rx="1" fill="#e8e8e8" stroke="#bbb" stroke-width=".6"/><rect x="7" y="3" width="2" height="6" fill="#33a06a"/><rect x="10" y="4" width="2" height="5" fill="#1e7a4a"/><rect x="0" y="6" width="8" height="8" rx="1" fill="#107c41"/><path d="M2 8l4 4M6 8l-4 4" stroke="#fff" stroke-width="1.1"/></svg>
<div class="t" style="left:357px;top:322px;font-size:11px;color:#424242;letter-spacing:-.2px">Doc2.xlsx</div>
<div class="t" style="left:454px;top:321px;font-size:12px;color:#616161">+1</div>
<div class="a" style="left:263px;top:352px;width:314px;height:1px;background:#e3e3e3"></div>
<!-- group Este mes -->
<div class="a grp" style="top:353px;height:33px"></div>
<svg style="left:301px;top:367px" width="9" height="5" viewBox="0 0 9 5" fill="none" stroke="#616161" stroke-width="1"><path d="M.5.5l4 4 4-4"/></svg>
<div class="t gt" style="left:327px;top:363px">Este mes</div>
<div class="a" style="left:263px;top:386px;width:314px;height:1px;background:#e3e3e3"></div>
<!-- email 2 -->
<svg style="left:291px;top:398px" width="26" height="29"><use href="#man"/></svg>
<div class="t ln" style="left:327px;top:397px;color:#242424">Joaquin Lorem</div>
<svg style="left:539px;top:396px" width="12" height="14" viewBox="0 0 12 14" fill="none" stroke="#616161" stroke-width="1"><path d="M4 13.5L10.5 6a2.2 2.2 0 0 0-3.2-3L1.8 9.3a1.3 1.3 0 0 0 1.9 1.8L9 5"/></svg>
<div class="t ln" style="left:327px;top:415px;color:#242424">Revisar documentación</div>
<div class="t dt" style="left:510px;top:416px">Jue 08/01</div>
<div class="t ln" style="left:327px;top:433px;color:#616161">Hola Amesia, Te envío la documentació...</div>
<div class="a" style="left:327px;top:453px;width:119px;height:25px;border:1px solid #e0e0e0;border-radius:3px"></div>
<svg style="left:336px;top:459px" width="15" height="15" viewBox="0 0 15 15"><rect x="4" y="1" width="10" height="12" rx="1" fill="#e8eef8" stroke="#9bb4dc" stroke-width=".6"/><path d="M7 4h5M7 6h5M7 8h5" stroke="#2b63c0" stroke-width=".9"/><rect x="0" y="6" width="8" height="8" rx="1" fill="#1d4fb0"/><path d="M1.5 8l1 4 1.5-3 1.5 3 1-4" fill="none" stroke="#fff" stroke-width=".9"/></svg>
<div class="t" style="left:357px;top:460px;font-size:11px;color:#424242;letter-spacing:-.2px">Escrito V1 Con...</div>
<div class="t" style="left:454px;top:459px;font-size:12px;color:#616161">+1</div>
<div class="a" style="left:263px;top:490px;width:314px;height:1px;background:#e3e3e3"></div>
<!-- email 3 -->
<svg style="left:291px;top:503px" width="26" height="29"><use href="#man"/></svg>
<div class="t ln" style="left:327px;top:501px;color:#242424">Joaquin Lorem</div>
<div class="t ln" style="left:327px;top:519px;color:#242424">Reunión urgente</div>
<div class="t dt" style="left:510px;top:520px">Jue 08/01</div>
<div class="a" style="left:327px;top:536px;width:93px;height:18px;background:#d3f1fa;border:1px solid #63c6e4;border-radius:3px"></div>
<div class="t" style="left:331px;top:540px;font-size:10.8px;color:#184a5e">Seguido en iusUp</div>
<div class="t ln" style="left:424px;top:539px;color:#616161">Hola, Cuando podem...</div>
<div class="a" style="left:263px;top:565px;width:314px;height:1px;background:#e3e3e3"></div>
<!-- group 2025 -->
<div class="a grp" style="top:566px;height:32px"></div>
<svg style="left:301px;top:580px" width="9" height="5" viewBox="0 0 9 5" fill="none" stroke="#616161" stroke-width="1"><path d="M.5.5l4 4 4-4"/></svg>
<div class="t gt" style="left:327px;top:576px">2025</div>
<div class="a" style="left:263px;top:598px;width:314px;height:1px;background:#e3e3e3"></div>
<!-- email 4 -->
<svg style="left:291px;top:611px" width="26" height="29"><use href="#man"/></svg>
<div class="t ln" style="left:327px;top:610px;color:#242424">Joaquin Lorem</div>
<div class="t ln" style="left:327px;top:628px;color:#242424">Alta de expediente – Recla...</div>
<div class="t dt" style="left:501px;top:629px">04/11/2025</div>
<div class="t ln" style="left:327px;top:646px;color:#616161">Hola Amesia, Te escribo para que pued...</div>
<div class="a" style="left:263px;top:671px;width:314px;height:1px;background:#e3e3e3"></div>
<div id="compose" class="a"></div>
<div id="rpane" class="a"></div>
<!-- COMPOSE -->
<div class="a" style="left:598px;top:180px;width:103px;height:29px;background:#13804a;border-radius:4px"></div>
<div class="a" style="left:679px;top:180px;width:1px;height:29px;background:#e6f3ea"></div>
<svg style="left:611px;top:186px" width="16" height="16" viewBox="0 0 16 16" fill="none" stroke="#fff" stroke-width="1.2"><path d="M1.5 1.5l13 6.5-13 6.5 2.5-6.5z"/><path d="M4 8h10"/></svg>
<div class="t" style="left:634px;top:188px;font-size:12px;color:#fff;letter-spacing:0;-webkit-text-stroke:.45px #fff">Enviar</div>
<svg style="left:686px;top:192px" width="8" height="5" viewBox="0 0 8 5" fill="none" stroke="#fff" stroke-width="1.3"><path d="M.7.7L4 4 7.3.7"/></svg>
<svg style="left:1492px;top:188px" width="12" height="13" viewBox="0 0 12 13" fill="none" stroke="#616161" stroke-width="1"><path d="M6 .5C4.5 1.5 2.5 2 .5 2v4.5C.5 9.5 3 11.5 6 12.5c3-1 5.5-3 5.5-6V2C9.5 2 7.5 1.5 6 .5z"/><path d="M4.5 5a1.5 1.5 0 1 1 2 1.4c-.4.2-.5.5-.5.9v.5" /><circle cx="6" cy="9.3" r=".4" fill="#616161"/></svg>
<svg style="left:1515px;top:193px" width="9" height="5" viewBox="0 0 9 5" fill="none" stroke="#8a8a8a" stroke-width="1"><path d="M.5.5l4 4 4-4"/></svg>
<svg style="left:1546px;top:186px" width="14" height="16" viewBox="0 0 14 16" fill="none" stroke="#616161" stroke-width="1.1"><path d="M.5 3h13M5 3V1.5A1 1 0 0 1 6 .5h2a1 1 0 0 1 1 1V3M2 3l1 11a1.5 1.5 0 0 0 1.5 1.5h5A1.5 1.5 0 0 0 11 14l1-11M5.5 6.5v6M8.5 6.5v6"/></svg>
<svg style="left:1579px;top:187px" width="14" height="14" viewBox="0 0 14 14" fill="none" stroke="#616161" stroke-width="1.1"><path d="M2.5 2A1.5 1.5 0 0 0 1 3.5V11a2.5 2.5 0 0 0 2.5 2.5H11A1.5 1.5 0 0 0 12.5 12"/><rect x="2.5" y=".6" width="10.9" height="11" rx="2"/><path d="M6.5 8L11 3.5M7.5 3.5H11V7"/></svg>
<div class="a" style="left:587px;top:216px;width:1024px;height:1px;background:#e6e6e6"></div>
<div class="a" style="left:598px;top:228px;width:47px;height:29px;border:1px solid #d1d1d1;border-radius:4px"></div>
<div class="t" style="left:610px;top:237px;font-size:11.6px;color:#242424;letter-spacing:0;-webkit-text-stroke:.45px #242424">Para</div>
<div class="a" style="left:657px;top:229px;width:131px;height:22px;border:1px solid #e6e6e6;border-radius:4px"></div>
<svg style="left:662px;top:233px" width="12" height="12" viewBox="0 0 12 12" fill="none" stroke="#424242" stroke-width="1"><circle cx="6" cy="6" r="5.3"/><path d="M4 4l4 4M8 4l-4 4" stroke-width="1.2"/></svg>
<div class="t" style="left:676px;top:234px;font-size:12.4px;color:#242424">Joaquin Lorem</div>
<svg style="left:767px;top:235px" width="10" height="10" viewBox="0 0 10 10" fill="none" stroke="#424242" stroke-width="1.1"><path d="M.5.5l9 9M9.5.5l-9 9"/></svg>
<div class="t" style="left:1571px;top:235px;font-size:10.3px;color:#242424">CCO</div>
<div class="a" style="left:655px;top:256px;width:945px;height:1px;background:#8a8a8a"></div>
<div class="a" style="left:598px;top:268px;width:45px;height:29px;border:1px solid #d1d1d1;border-radius:4px"></div>
<div class="t" style="left:613px;top:277px;font-size:11px;color:#242424;letter-spacing:0;-webkit-text-stroke:.45px #242424">CC</div>
<div class="a" style="left:655px;top:295px;width:945px;height:1px;background:#8a8a8a"></div>
<div class="t" style="left:598px;top:319px;font-size:12.6px;color:#707070">Agregar un asunto</div>
<div class="t" style="left:1447px;top:319px;font-size:10.5px;color:#616161">Borrador guardado a las 12:04</div>
<div class="a" style="left:598px;top:339px;width:1002px;height:1px;background:#8a8a8a"></div>
<div class="a" style="left:620px;top:355px;width:234px;height:43px;border:1px solid #e8e8e8;border-radius:4px"></div>
<svg style="left:629px;top:370px" width="15" height="13" viewBox="0 0 15 13" fill="none" stroke="#8a8a8a" stroke-width="1"><rect x=".5" y=".5" width="14" height="12" rx="2" fill="#f0f0f0"/><path d="M1 2l6.5 5L14 2"/></svg>
<div class="t" style="left:652px;top:365px;font-size:12.2px;color:#424242">RE Solicitud de información s...</div>
<div class="t" style="left:652px;top:382px;font-size:9px;color:#616161">2 MB</div>
<svg style="left:833px;top:372px" width="11" height="6" viewBox="0 0 11 6" fill="none" stroke="#616161" stroke-width="1.1"><path d="M.5.5l5 5 5-5"/></svg>
<div class="a" style="left:620px;top:409px;width:960px;height:1px;background:#ededed"></div>
<svg style="left:596px;top:420px" width="14" height="14" viewBox="0 0 14 14" fill="none" stroke="#616161" stroke-width="1"><path d="M2 13l1-3.5 7-7 2.5 2.5-7 7z"/><path d="M2.5 1v3M1 2.5h3M6 .5v1.5M5.2 1.2h1.6"/></svg>
<div class="t" style="left:619px;top:421px;font-size:12.8px;color:#616161">Borrador con Copilot (Alt+i)</div>
<!-- RIGHT PANE -->
<svg style="left:1645px;top:57px" width="29" height="28"><use href="#iu"/></svg>
<div class="t" style="left:1681px;top:58px;font-size:19px;color:#2f3b48">iusUp para MS Outlo...</div>
<svg style="left:1886px;top:65px" width="11" height="11" viewBox="0 0 11 11" fill="none" stroke="#2a7a74" stroke-width="1.2"><path d="M.5.5l10 10M10.5.5l-10 10"/></svg>
<div class="a" style="left:1632px;top:102px;width:279px;height:38px;background:#8f1c1c;border-radius:5px;box-shadow:0 2px 3px rgba(0,0,0,.18)"></div>
<div class="t" style="left:1673px;top:112px;font-size:12.5px;color:#fff;letter-spacing:0;-webkit-text-stroke:.45px #fff">Volver al seguimiento en proceso...</div>
<div class="t" style="left:1632px;top:160px;font-size:17px;color:#323130">Expediente: EXP-000006</div>
<svg style="left:1843px;top:163px" width="16" height="16" viewBox="0 0 16 16" fill="none" stroke="#424242" stroke-width="1.3"><path d="M6.5 2.5H2.5a1.5 1.5 0 0 0-1.5 1.5v9.5a1.5 1.5 0 0 0 1.5 1.5H12a1.5 1.5 0 0 0 1.5-1.5V9.5"/><path d="M9.5 1h5.5v5.5M15 1L7.5 8.5"/></svg>
<svg style="left:1888px;top:163px" width="14" height="14" viewBox="0 0 14 14" fill="none" stroke="#555" stroke-width="1.3"><path d="M.6.6l12.8 12.8M13.4.6L.6 13.4"/></svg>
<div class="a" style="left:1627px;top:203px;width:288px;height:1px;background:#d6d6d6"></div>
<div class="t" style="left:1656px;top:244px;font-size:11.8px;color:#2c6bc8">Resumen</div>
<div class="a" style="left:1722px;top:233px;width:102px;height:36px;background:#efefef;border-radius:4px 4px 0 0"></div>
<div class="t" style="left:1738px;top:244px;font-size:12.5px;color:#323130">Documentos</div>
<div class="a" style="left:1641px;top:267px;width:261px;height:54px;background:#efefef"></div>
<div class="a" style="left:1650px;top:277px;width:91px;height:35px;background:#1f4a96;border-radius:4px"></div>
<svg style="left:1661px;top:288px" width="15" height="13" viewBox="0 0 15 13" fill="none" stroke="#fff" stroke-width="1.1"><path d="M8 12H2A1.5 1.5 0 0 1 .5 10.5v-9A1.5 1.5 0 0 1 2 0h3l1.5 1.5H12A1.5 1.5 0 0 1 13.5 3v4"/><path d="M.5 4h13"/><path d="M12 9v4M10 11h4"/></svg>
<div class="t" style="left:1680px;top:287px;font-size:13.6px;color:#fff;letter-spacing:0;-webkit-text-stroke:.45px #fff">Carpeta</div>
<svg style="left:1762px;top:288px" width="15" height="15" viewBox="0 0 15 15" fill="none" stroke="#424242" stroke-width="1.2"><path d="M7.5 11V1M3.5 5l4-4 4 4M.6 10v3.5a1 1 0 0 0 1 1h11.8a1 1 0 0 0 1-1V10"/></svg>
<div class="t" style="left:1782px;top:288px;font-size:13.4px;color:#323130">Cargar</div>
<svg style="left:1864px;top:288px" width="15" height="15" viewBox="0 0 15 15" fill="none" stroke="#424242" stroke-width="1.2"><path d="M6 2.5H2a1.4 1.4 0 0 0-1.4 1.4v9.5A1.4 1.4 0 0 0 2 14.8h9.5a1.4 1.4 0 0 0 1.4-1.4V9"/><path d="M9 .6h5.4V6M14.4.6L7 8"/></svg>
<div class="a" style="left:1645px;top:327px;width:270px;font-size:14px;line-height:21.7px;color:#3b3a39;white-space:nowrap">EXP-000006 - Tecnologías del Norte<br>S.L. &gt; Actividades &gt; Email - Otros - RE<br>Solicitud de información sobre asesoría<br>fiscal - 20260121105138</div>
<div class="a" style="left:1641px;top:417px;width:261px;height:57px;background:#f3f3f3"></div>
<svg style="left:1649px;top:440px" width="17" height="11" viewBox="0 0 17 11" fill="none" stroke="#424242" stroke-width="1.2"><rect x=".6" y=".6" width="15.8" height="9.8" rx="1"/><path d="M1 1.2l7.5 5 7.5-5"/></svg>
<div class="t" style="left:1679px;top:430px;font-size:12.3px;color:#323130">RE Solicitud de información sobre ...</div>
<div class="t" style="left:1679px;top:450px;font-size:11px;color:#616161">21/1/2026</div>
<svg style="left:1887px;top:439px" width="3" height="15" viewBox="0 0 3 15" fill="#424242"><circle cx="1.5" cy="1.5" r="1"/><circle cx="1.5" cy="7.5" r="1"/><circle cx="1.5" cy="13.5" r="1"/></svg>
<svg style="left:1649px;top:494px" width="15" height="17" viewBox="0 0 15 17" fill="none" stroke="#d4694a" stroke-width="1.1"><path d="M2.5 7V2A1.5 1.5 0 0 1 4 .5h6l3.5 3.5v3M2.5 14v1A1.5 1.5 0 0 0 4 16.5h8A1.5 1.5 0 0 0 13.5 15v-1"/><rect x=".6" y="7.5" width="13.8" height="6" rx="1"/><text x="2.2" y="12.3" font-size="4.6" fill="#d4694a" stroke="none" font-family="Liberation Sans" font-weight="700">PDF</text></svg>
<div class="t" style="left:1679px;top:487px;font-size:12.3px;color:#323130">Presentacion de</div>
<div class="t" style="left:1679px;top:507px;font-size:11px;color:#616161">21/1/2026</div>
<!-- context menu -->
<div class="a" style="left:1771px;top:459px;width:150px;height:202px;background:#fafafa;border-radius:4px;box-shadow:0 3px 8px rgba(0,0,0,.16),0 0 2px rgba(0,0,0,.1)"></div>
<div class="a" style="left:1771px;top:620px;width:144px;height:41px;background:#f0f0f0;border-radius:0 0 0 4px"></div>
<div class="t mi" style="left:1786px;top:472px">Abrir</div>
<div class="t mi" style="left:1786px;top:513px">Descargar</div>
<div class="t mi" style="left:1786px;top:553px">Renombrar</div>
<div class="t mi" style="left:1786px;top:594px">Eliminar</div>
<div class="t mi" style="left:1786px;top:634px">Adjuntar al correo</div>
<div class="a" style="left:1627px;top:1052px;width:288px;height:1px;background:#e0e0e0"></div>
<!-- bottom tabs -->
<div class="a" style="left:578px;top:1043px;width:1047px;height:1px;background:#e8e8e8"></div>
<div class="a" style="left:588px;top:1051px;width:178px;height:28px;background:#ebebeb;border-radius:3px 3px 0 0"></div>
<div class="t" style="left:596px;top:1059px;font-size:12.4px;color:#242424">Seleccionar un elemento p...</div>
<div class="a" style="left:773px;top:1051px;width:180px;height:28px;background:#b8f5c8;border-radius:3px 3px 0 0"></div>
<svg style="left:781px;top:1059px" width="15" height="14" viewBox="0 0 15 14" fill="#3b3b3b"><path d="M1 13.5l.8-4L10 1.3a1.8 1.8 0 0 1 2.6 2.6L4.5 12.2z"/></svg>
<div class="t" style="left:804px;top:1059px;font-size:12px;color:#242424">(Sin asunto)</div>
<svg style="left:932px;top:1060px" width="12" height="12" viewBox="0 0 12 12" fill="none" stroke="#3b3b3b" stroke-width="1.4"><path d="M.7.7l10.6 10.6M11.3.7L.7 11.3"/></svg>
<!-- status -->
<div class="a" style="left:0;top:1058px;width:98px;height:21px;background:#e8e8cc;border-top:1px solid #d2d2b8;border-right:1px solid #dcdcc8"></div>
<div class="t" style="left:0px;top:1062px;font-size:12px;color:#3e3e30;letter-spacing:-.25px">javascript:void(0);</div>
</body></html>
